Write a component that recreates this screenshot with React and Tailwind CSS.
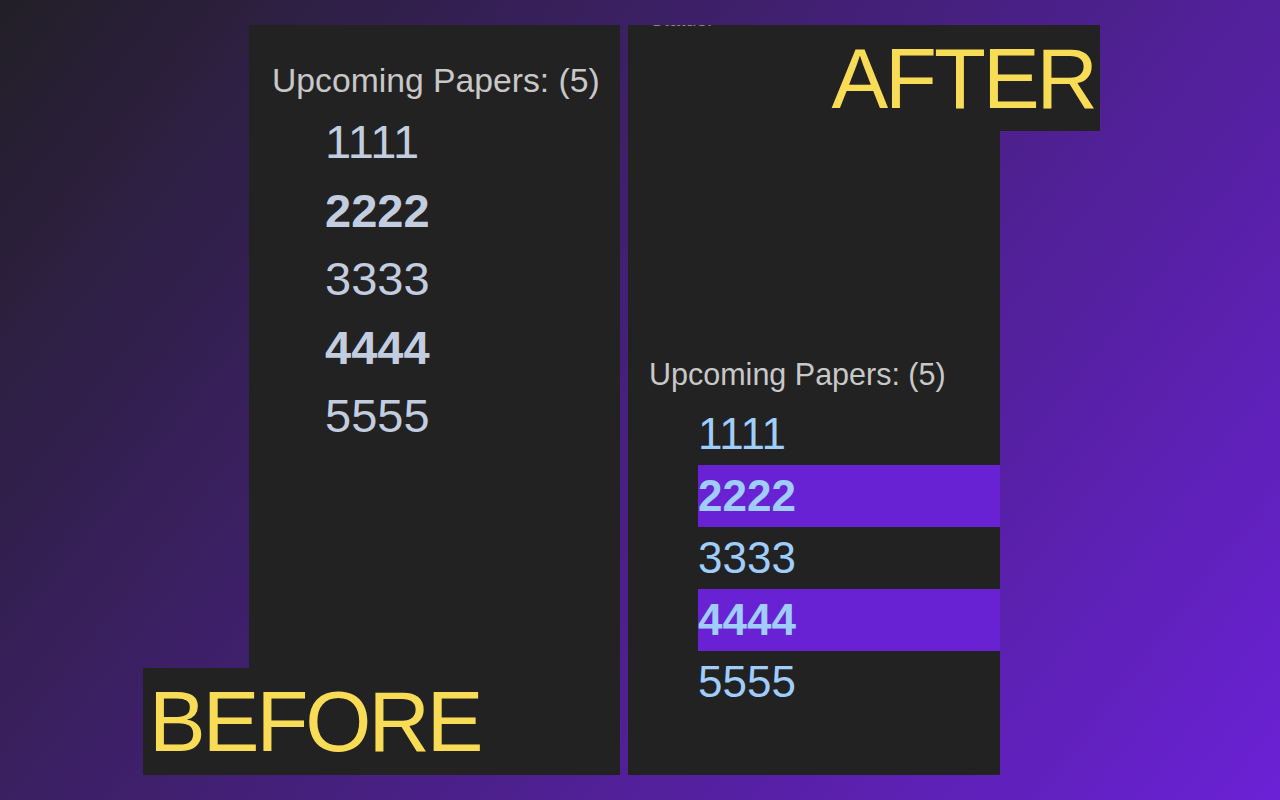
import React from 'react';

const papers = ['1111', '2222', '3333', '4444', '5555'];
const unread = ['2222', '4444'];

function BeforePanel() {
  return (
    <div className="w-[371px] h-[750px] bg-[#222222] pt-[35px]">
      <h2 className="pl-[23px] text-[33.7px] leading-[40px] text-[#c8c8c8]">Upcoming Papers: (5)</h2>
      <ul className="mt-2 pl-[76px]">
        {papers.map((p) => (
          <li
            key={p}
            className={`text-[47px] leading-[68.5px] text-[#c3cde0] ${unread.includes(p) ? 'font-bold' : 'font-normal'}`}
          >
            {p}
          </li>
        ))}
      </ul>
    </div>
  );
}

function AfterPanel() {
  return (
    <div className="w-[372px] h-[750px] bg-[#222222] overflow-hidden">
      <p className="-mt-[17px] h-[22px] pl-[22px] text-[20px] leading-[22px] text-[#8a8a8a]">Status:</p>
      <h2 className="mt-[326px] pl-[21px] text-[30.5px] leading-[36px] text-[#c8c8c8]">Upcoming Papers: (5)</h2>
      <ul className="mt-[11px] ml-[70px]">
        {papers.map((p) => (
          <li
            key={p}
            className={`h-[62px] flex items-center text-[44px] leading-[62px] text-[#9fcdfd] ${
              unread.includes(p) ? 'font-bold bg-[#6822d4]' : 'font-normal'
            }`}
          >
            {p}
          </li>
        ))}
      </ul>
    </div>
  );
}

export default function App() {
  return (
    <div
      className="relative w-full h-[800px] overflow-hidden bg-[linear-gradient(128deg,#221f27,#6b21d6)]"
      style={{ fontFamily: '"Liberation Sans", Arial, sans-serif' }}
    >
      <div className="flex gap-2 pt-[25px] pl-[249px]">
        <BeforePanel />
        <AfterPanel />
      </div>

      {/* labels laid over the panels */}
      <div className="absolute left-[143px] top-[668px] w-[477px] h-[107px] bg-[#222222] flex items-center pl-[6px]">
        <span className="text-[85px] leading-none tracking-[-3px] text-[#f9dc56]">BEFORE</span>
      </div>
      <div className="absolute left-[828px] top-[25px] w-[272px] h-[106px] bg-[#222222] flex items-center justify-end pr-[5px]">
        <span className="text-[85px] leading-none tracking-[-3px] text-[#f9dc56]">AFTER</span>
      </div>
    </div>
  );
}
